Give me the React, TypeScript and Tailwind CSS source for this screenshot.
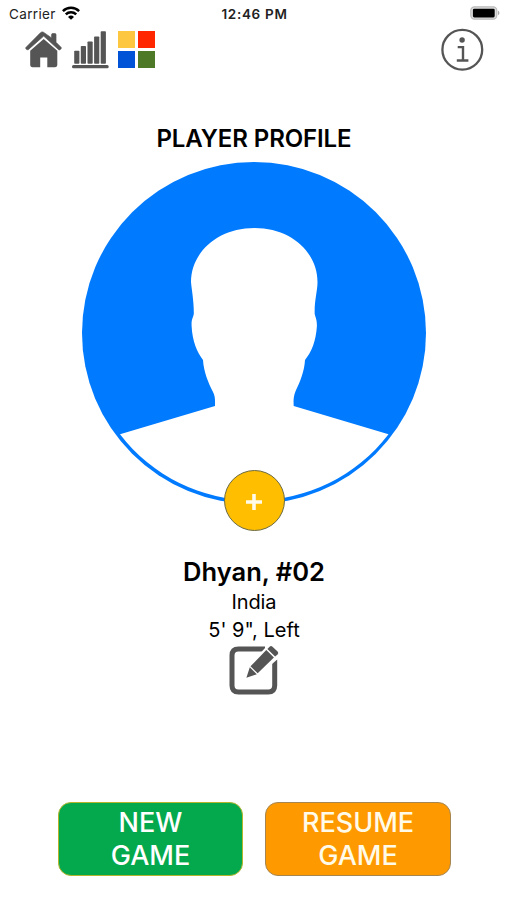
function WifiIcon() {
  return (
    <svg className="-mt-[2px] h-[14px] w-[18px]" viewBox="0 0 18 14" fill="none" stroke="#000" strokeWidth="2.5">
      <path d="M0.9 5.1a11.6 11.6 0 0 1 16.2 0" />
      <path d="M3.8 8.4a7.4 7.4 0 0 1 10.4 0" />
      <path d="M9 13.8 6 11a4.3 4.3 0 0 1 6 0Z" fill="#000" stroke="none" />
    </svg>
  )
}

function StatusBar() {
  return (
    <div className="grid h-7 grid-cols-3 items-center pl-[9px] pr-[7px] text-[#222]">
      <div className="flex items-center gap-[6px]">
        <span className="text-[13.5px] tracking-[0.35px]">Carrier</span>
        <WifiIcon />
      </div>
      <span className="text-center text-[13.5px] font-semibold tracking-[0.7px] whitespace-nowrap">12:46 PM</span>
      <svg className="-mt-[2px] h-[14px] w-[30px] justify-self-end" viewBox="0 0 30 14">
        <rect x="0.8" y="0.8" width="26" height="12.4" rx="3.6" fill="#ddd" stroke="#bbb" strokeWidth="1.2" />
        <rect x="2.9" y="2.7" width="21.8" height="8.8" rx="1.4" fill="#000" />
        <path d="M28 4.8v4.4c1.900-.7 1.900-3.700 0-4.400Z" fill="#aaa" />
      </svg>
    </div>
  )
}

function HomeIcon() {
  return (
    <svg className="h-[38px] w-[38px]" viewBox="25 31 38 38" fill="#555">
      <path
        d="M43.7 32.4c-1-.6-2-.6-3 .2L25.9 47.500c-.7.8.9 2.900 2.300 2.200L43.700 36.100l15 13.600c1.500.8 3-1.300 2.500-2.200L56 42.300v-7.600c0-.7-.4-1.100-1.100-1.100h-2.200c-.7 0-1.100.4-1.100 1.100v3.200Z"
        stroke="#555"
        strokeWidth="0.7"
      />
      <path d="M43.7 39 30.200 50.800v14c0 1.600.8 2.400 2.400 2.400h7.600v-9.800h7.100v9.800h7.600c1.600 0 2.400-.8 2.400-2.400v-14Z" />
    </svg>
  )
}

function StatsIcon() {
  return (
    <svg className="h-[38px] w-[38px]" viewBox="72 31 38 38" fill="#555">
      <rect x="74.2" y="50.7" width="5.2" height="13" rx="0.8" />
      <rect x="80.8" y="46" width="5.200" height="17.700" rx="0.8" />
      <rect x="87.5" y="41.500" width="5.200" height="22.200" rx="0.8" />
      <rect x="94.1" y="36.500" width="5.200" height="27.200" rx="0.8" />
      <rect x="100.7" y="31.300" width="5.200" height="32.400" rx="0.8" />
      <rect x="72" y="65" width="36.700" height="3.200" rx="1.500" />
    </svg>
  )
}

function Toolbar() {
  return (
    <div className="flex h-[44px] items-start justify-between pt-[3px] pl-[25px] pr-[23.500px]">
      <div className="flex gap-[8.5px]">
        <HomeIcon />
        <StatsIcon />
        <div className="grid h-[37px] w-[37px] grid-cols-2 gap-[3px]">
          <div className="bg-[#fdc840]" />
          <div className="bg-[#ff2600]" />
          <div className="bg-[#0053d6]" />
          <div className="bg-[#4e7a27]" />
        </div>
      </div>
      <svg className="-mt-[3px] h-[43px] w-[43px]" viewBox="440.5 28 43 43" fill="none" stroke="#555">
        <circle cx="461.8" cy="49.7" r="19.9" strokeWidth="2.3" />
        <circle cx="461.6" cy="40" r="2.7" fill="#555" stroke="none" />
        <path d="M457.2 47.1h5.3v13.400M456.300 60.500h11.600" strokeWidth="2.4" />
      </svg>
    </div>
  )
}

function Avatar() {
  return (
    <div className="relative mt-[6px] h-[371px] w-[348px]">
      <svg className="h-[348px] w-[348px]" viewBox="80 160 348 348">
        <ellipse cx="254" cy="333" rx="172" ry="171" fill="#007aff" />
        <path
          d="M254.5 228C217 228 191 253 191 282C191.500 289 194 301 193.800 314C193 318 191.300 319 191.600 326C192.300 341 197 352 203 360C203.700 372 208.500 383 213 392C215.500 397 215 401 215 406L120 434.300A168.800 167.800 0 0 0 388.500 434.300L293.700 406C293.500 401 293.200 397 295.600 391C300 382 304.500 371 305 360C311.500 352 316 341 316.900 326C317 319 315.500 318 314.700 314C314.200 301 317.500 291 317.500 282C317.500 253 292 228 254.500 228Z"
          fill="#fff"
        />
      </svg>
      <button className="absolute bottom-0 left-[143.500px] flex h-[61px] w-[61px] items-center justify-center rounded-full border border-[#6b6a45] bg-[#ffbf00]">
        <svg className="h-4 w-4 translate-y-[1px]" viewBox="0 0 16 16" stroke="#fffbe8" strokeWidth="3.6">
          <path d="M0 8h16M8 0v16" />
        </svg>
      </button>
    </div>
  )
}

function EditIcon() {
  return (
    <svg className="mt-px h-[51px] w-[50px]" viewBox="229 644 50 51" fill="none">
      <path
        d="M265 648h-26.500q-6.500 0-6.500 6.500v30q0 6.500 6.500 6.500h29.700q6.500 0 6.500-6.500v-26"
        stroke="#555"
        strokeWidth="5"
      />
      <path d="M246.500 676.800 250 665.500 268 646 279 655 257 674Z" stroke="#fff" strokeWidth="3" fill="#fff" />
      <path d="m246.400 676.700 3.400-10.400 7 6.900Z M250.500 665.300l15.800-16.300 7.600 7.400-16.200 15.900Z" fill="#555" />
      <path d="m267.400 648 2.200-2.200q1.400-1.400 2.900 0l5.100 4.800q1.400 1.400 0 2.800l-2.500 2.200Z" fill="#555" />
    </svg>
  )
}

export default function App() {
  return (
    <main className="flex h-[900px] w-[507px] flex-col overflow-hidden bg-white font-['Inter','Liberation_Sans',sans-serif] text-black">
      <StatusBar />
      <Toolbar />
      <section className="flex flex-col items-center pt-[52px] pl-px">
        <h1 className="text-[24px] leading-[30px] font-semibold tracking-[-0.1px]">PLAYER PROFILE</h1>
        <Avatar />
        <h2 className="mt-[25px] text-[25.5px] leading-[32px] font-semibold">Dhyan, #02</h2>
        <p className="mt-px text-[20px] leading-[27px] tracking-[-0.1px]">India</p>
        <p className="text-[20px] leading-[28px]">5' 9", Left</p>
        <EditIcon />
      </section>
      <div className="mt-auto mb-[24px] flex gap-[22px] pl-[58px]">
        <button className="h-[74px] w-[185px] rounded-[13px] border border-[#b5b52c] bg-[#04a94d] px-8 text-[27px] leading-[33px] font-medium text-white">
          NEW
          <br />
          GAME
        </button>
        <button className="h-[74px] w-[186px] rounded-[13px] border border-[#a58550] bg-[#ff9900] px-8 text-[27px] leading-[33px] font-medium text-[#fffbe8]">
          RESUME GAME
        </button>
      </div>
    </main>
  )
}
